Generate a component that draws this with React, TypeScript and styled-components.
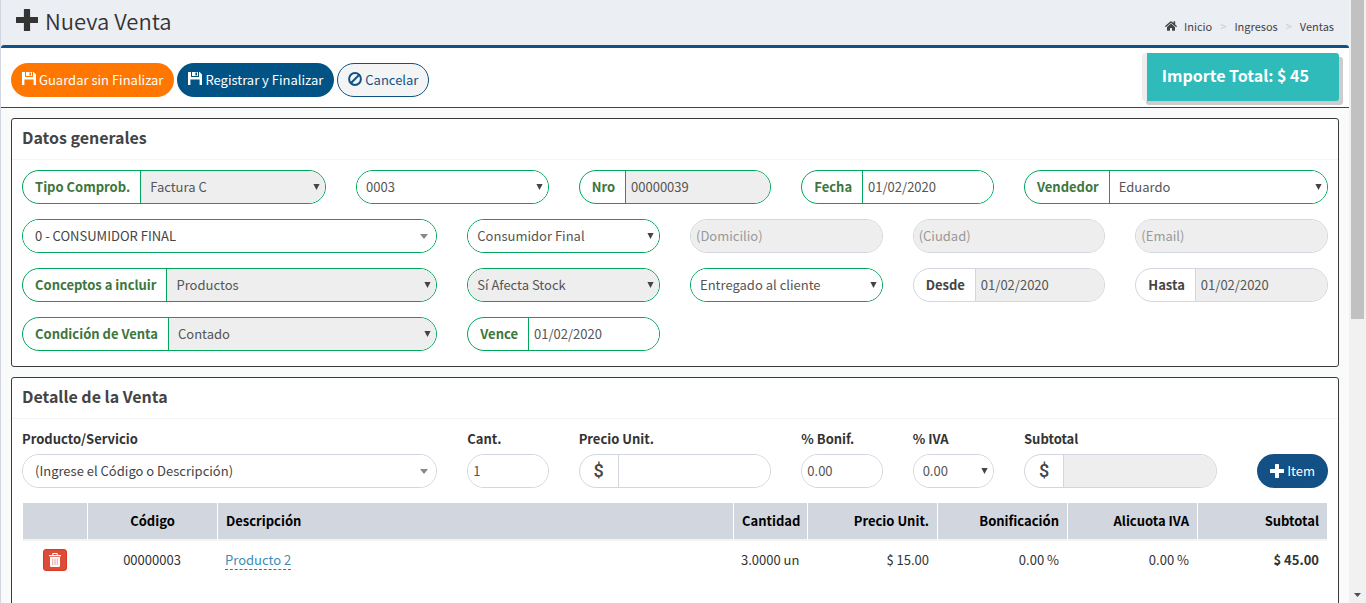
import React, { useId } from 'react';
import styled, { createGlobalStyle, css } from 'styled-components';
import { FaHome } from 'react-icons/fa';

const GlobalStyle = createGlobalStyle`
  *, *::before, *::after { box-sizing: border-box; }
  body {
    margin: 0;
    background: #f9fafa;
    color: #333;
    font-family: "Noto Sans CJK SC", "Open Sans", sans-serif;
    font-size: 13px;
    line-height: 20px;
  }
  button, input, select { font: inherit; margin: 0; }
`;

const GREEN = '#00a65a';
const GREY = '#d2d6de';
const BLUE = '#0f5288';

const Shell = styled.div`
  display: flex;
  height: 100vh;
  overflow: hidden;
`;

const Content = styled.div`
  flex: 1;
  min-width: 0;
  overflow: hidden;
  border-left: 1px solid ${GREY};
`;

const ScrollTrack = styled.div`
  flex: 0 0 17px;
  display: flex;
  flex-direction: column;
  align-items: center;
  justify-content: space-between;
  padding-bottom: 6px;
  background: #f1f1f1;
`;

const ScrollThumb = styled.div`
  width: 13px;
  height: 53.5%;
  background: #c1c1c1;
`;

const PageHeader = styled.header`
  display: flex;
  justify-content: space-between;
  height: 45px;
  padding: 0 15px;
  background: #ebeef3;
`;

const PageTitle = styled.h1`
  display: flex;
  align-items: center;
  gap: 7px;
  height: 40px;
  margin: 0;
  font-size: 22px;
  font-weight: 350;
  line-height: 24px;
`;

const Crumbs = styled.nav`
  display: flex;
  align-items: center;
  gap: 8px;
  height: 52px;
  font-size: 11px;
  color: #ccc;
`;

const Crumb = styled.a`
  display: flex;
  align-items: center;
  gap: 7px;
  color: #444;
  text-decoration: none;
`;

const Toolbar = styled.div`
  display: flex;
  align-items: flex-start;
  gap: 3px;
  height: 63px;
  padding: 0 10px;
  border-top: 3px solid ${BLUE};
  border-bottom: 1px solid ${BLUE};
  border-radius: 3px 3px 0 0;
  background: #fff;
`;

const ToolbarActions = styled.div`
  display: flex;
  gap: 3px;
  padding-top: 15px;
`;

const PillButton = styled.button<{ $tone: 'orange' | 'blue' | 'navy' | 'plain' }>`
  display: flex;
  align-items: center;
  justify-content: center;
  gap: 3px;
  height: 34px;
  padding: 0 10px;
  border: 1px solid transparent;
  border-radius: 17px;
  color: #fff;
  white-space: nowrap;
  cursor: pointer;
  ${({ $tone }) => $tone === 'orange' && css`background: #ff7701;`}
  ${({ $tone }) => $tone === 'blue' && css`background: #005384;`}
  ${({ $tone }) => $tone === 'navy' && css`
    padding: 0 12px;
    background: #125085;
  `}
  ${({ $tone }) => $tone === 'plain' && css`
    background: #f4f4f4;
    border-color: ${BLUE};
    color: ${BLUE};
  `}
`;

const TotalBadge = styled.output`
  height: 48px;
  margin: 5px 0 0 auto;
  padding: 0 30px 0 15px;
  border-left: 5px solid #eee;
  border-radius: 3px;
  background: #30bbbb;
  box-shadow: 4px 4px 0 #ccc;
  color: #fff;
  font-size: 16px;
  font-weight: 700;
  line-height: 44px;
`;

const Main = styled.main`
  display: flex;
  flex-direction: column;
  gap: 10px;
  padding: 10px;
`;

const Panel = styled.section`
  border: 1px solid #3a3a3a;
  border-radius: 3px;
  background: #fff;
`;

const PanelTitle = styled.h2`
  height: 41px;
  margin: 0;
  padding: 0 10px;
  border-bottom: 1px solid #f4f4f4;
  color: #444;
  font-size: 16px;
  font-weight: 700;
  line-height: 36px;
`;

const FormGrid = styled.div`
  display: grid;
  grid-template-columns: repeat(12, minmax(0, 1fr));
  gap: 15px 30px;
  padding: 10px 10px 15px;
`;

const Cell = styled.div<{ $span: number; $end?: boolean }>`
  grid-column: span ${({ $span }) => $span};
  ${({ $end }) => $end && css`
    display: flex;
    align-items: flex-end;
    justify-content: flex-end;
  `}
`;

const TopLabel = styled.label`
  display: block;
  height: 25px;
  font-weight: 700;
`;

const Frame = styled.div<{ $valid?: boolean }>`
  --line: ${({ $valid }) => ($valid ? GREEN : GREY)};
  display: flex;
  height: 34px;
  border: 1px solid var(--line);
  border-radius: 17px;
  overflow: hidden;
  background: #fff;
`;

const Addon = styled.label<{ $valid?: boolean }>`
  flex: none;
  padding: 0 10px 0 12px;
  border-right: 1px solid var(--line);
  color: ${({ $valid }) => ($valid ? '#3c763d' : '#444')};
  font-weight: 700;
  line-height: 32px;
  white-space: nowrap;
`;

const Currency = styled.span`
  flex: 0 0 39px;
  border-right: 1px solid var(--line);
  color: #444;
  font-family: Roboto, "Liberation Sans", sans-serif;
  font-size: 18px;
  font-weight: 500;
  line-height: 32px;
  text-align: center;
`;

const TextInput = styled.input`
  flex: 1;
  min-width: 0;
  padding: 0 5px;
  border: 0;
  outline: 0;
  background: #fff;
  color: #555;
  &:read-only { background: #eee; }
  &::placeholder { color: #999; opacity: 1; }
`;

const SelectBox = styled.div`
  display: grid;
  flex: 1;
  align-items: center;
  min-width: 0;
  > * { grid-area: 1 / 1; }
  > svg { justify-self: end; pointer-events: none; }
`;

const NativeSelect = styled.select<{ $search?: boolean }>`
  appearance: none;
  width: 100%;
  height: 32px;
  padding: 0 22px 0 ${({ $search }) => ($search ? 12 : 9)}px;
  border: 0;
  outline: 0;
  background: #fff;
  color: ${({ $search }) => ($search ? '#444' : '#555')};
  opacity: 1;
  &:disabled { background: #eee; }
`;

const Arrow = styled.svg<{ $search?: boolean }>`
  margin-right: ${({ $search }) => ($search ? 8 : 5)}px;
  fill: ${({ $search }) => ($search ? '#888' : '#444')};
`;

const TableWrap = styled.div`
  padding: 0 11px 40px 10px;
`;

const Table = styled.table`
  width: 100%;
  table-layout: fixed;
  border-collapse: separate;
  border-spacing: 0;
`;

const Col = styled.col<{ $width?: string }>`
  width: ${({ $width }) => $width ?? 'auto'};
`;

type Align = 'left' | 'center' | 'right';

const HeadCell = styled.th<{ $align: Align }>`
  height: 38px;
  padding: 0 8px;
  border-left: 1px solid #fff;
  border-bottom: 2px solid #f4f4f4;
  background: ${GREY};
  background-clip: padding-box;
  color: #000;
  text-align: ${({ $align }) => $align};
  white-space: nowrap;
`;

const BodyCell = styled.td<{ $align: Align; $strong?: boolean }>`
  height: 38px;
  padding: 0 8px;
  text-align: ${({ $align }) => $align};
  font-weight: ${({ $strong }) => ($strong ? 700 : 400)};
  white-space: nowrap;
`;

const EditLink = styled.a`
  border-bottom: 1px dashed #0088cc;
  color: #3c8dbc;
  text-decoration: none;
`;

const DeleteButton = styled.button`
  display: inline-flex;
  align-items: center;
  justify-content: center;
  width: 24px;
  height: 22px;
  padding: 0;
  border: 1px solid #d73925;
  border-radius: 3px;
  background: #dd4b39;
  color: #fff;
  vertical-align: middle;
`;

const PlusIcon = ({ size }: { size: number }) => (
  <svg width={size} height={size} viewBox="0 0 22 22" fill="currentColor" aria-hidden="true">
    <path d="M8.5 0h5q.6 0 .6.6v7.3h7.3q.6 0 .6.6v5q0 .6-.6.6h-7.3v7.3q0 .6-.6.6h-5q-.6 0-.6-.6v-7.3H.6q-.6 0-.6-.6v-5q0-.6.6-.6h7.3V.6q0-.6.6-.6z" />
  </svg>
);

const SaveIcon = () => (
  <svg width="14" height="18" viewBox="0 0 14 18" fill="currentColor" aria-hidden="true">
    <path fillRule="evenodd" d="M0 1h3v5h8V1h.6L14 3.4V14h-2.4V8.4H2.4V14H0zM4 1h6v4H4zM7.4 1.6v2.8h1.6V1.6z" />
  </svg>
);

const BanIcon = () => (
  <svg width="14" height="16" viewBox="0 0 14 16" fill="none" stroke="currentColor" strokeWidth="2" aria-hidden="true">
    <circle cx="7" cy="7" r="5.9" />
    <path d="M3 11L11 3" />
  </svg>
);

const TrashIcon = () => (
  <svg width="12" height="14" viewBox="0 0 12 14" fill="currentColor" aria-hidden="true">
    <path fillRule="evenodd" d="M4 0h4q.7 0 .7.7V2H12v1.2H0V2h3.3V.7Q3.3 0 4 0zm.4 1v1h3.2V1zM1 4h10v8.8q0 1.2-1.2 1.2H2.2Q1 14 1 12.8z" />
    <path d="M3.5 5.5v6.5M5.2 5.5v6.5M6.8 5.5v6.5M8.5 5.5v6.5" stroke="#dd4b39" strokeWidth="0.4" />
  </svg>
);

interface FieldProps {
  label: string;
  addon?: boolean;
  valid?: boolean;
}

interface SelectFieldProps extends FieldProps {
  value: string;
  disabled?: boolean;
  search?: boolean;
  id?: string;
}

function SelectField({ label, addon, valid, value, disabled, search, id }: SelectFieldProps) {
  const autoId = useId();
  const fieldId = id ?? autoId;
  return (
    <Frame $valid={valid}>
      {addon && <Addon htmlFor={fieldId} $valid={valid}>{label}</Addon>}
      <SelectBox>
        <NativeSelect id={fieldId} aria-label={addon || id ? undefined : label} disabled={disabled} $search={search}>
          <option>{value}</option>
        </NativeSelect>
        {search ? (
          <Arrow $search width="8" height="5" viewBox="0 0 8 5"><path d="M0 0h8L4 5z" /></Arrow>
        ) : (
          <Arrow width="7" height="8" viewBox="0 0 7 8"><path d="M.4 1h6.2L3.5 7z" /></Arrow>
        )}
      </SelectBox>
    </Frame>
  );
}

interface InputFieldProps extends FieldProps {
  value?: string;
  placeholder?: string;
  readOnly?: boolean;
  currency?: boolean;
  id?: string;
}

function InputField({ label, addon, valid, value = '', placeholder, readOnly, currency, id }: InputFieldProps) {
  const autoId = useId();
  const fieldId = id ?? autoId;
  return (
    <Frame $valid={valid}>
      {addon && <Addon htmlFor={fieldId} $valid={valid}>{label}</Addon>}
      {currency && <Currency>$</Currency>}
      <TextInput
        id={fieldId}
        aria-label={addon || id ? undefined : label}
        defaultValue={value}
        placeholder={placeholder}
        readOnly={readOnly}
      />
    </Frame>
  );
}

const columns: { title: string; align: Align; width?: string }[] = [
  { title: '', align: 'center', width: '65px' },
  { title: 'Código', align: 'center', width: '130px' },
  { title: 'Descripción', align: 'left' },
  { title: 'Cantidad', align: 'right', width: '74px' },
  { title: 'Precio Unit.', align: 'right', width: '130px' },
  { title: 'Bonificación', align: 'right', width: '130px' },
  { title: 'Alicuota IVA', align: 'right', width: '130px' },
  { title: 'Subtotal', align: 'right', width: '130px' },
];

export default function App() {
  return (
    <Shell>
      <GlobalStyle />
      <Content>
        <PageHeader>
          <PageTitle><PlusIcon size={22} />Nueva Venta</PageTitle>
          <Crumbs aria-label="Ruta">
            <Crumb href="#inicio"><FaHome size={12} />Inicio</Crumb>
            <span>&gt;</span>
            <Crumb href="#ingresos">Ingresos</Crumb>
            <span>&gt;</span>
            <Crumb href="#ventas">Ventas</Crumb>
          </Crumbs>
        </PageHeader>

        <Toolbar>
          <ToolbarActions>
            <PillButton type="button" $tone="orange"><SaveIcon />Guardar sin Finalizar</PillButton>
            <PillButton type="button" $tone="blue"><SaveIcon />Registrar y Finalizar</PillButton>
            <PillButton type="button" $tone="plain"><BanIcon />Cancelar</PillButton>
          </ToolbarActions>
          <TotalBadge>Importe Total: $ 45</TotalBadge>
        </Toolbar>

        <Main>
          <Panel>
            <PanelTitle>Datos generales</PanelTitle>
            <FormGrid>
              <Cell $span={3}><SelectField label="Tipo Comprob." addon valid disabled value="Factura C" /></Cell>
              <Cell $span={2}><SelectField label="Punto de venta" valid value="0003" /></Cell>
              <Cell $span={2}><InputField label="Nro" addon valid readOnly value="00000039" /></Cell>
              <Cell $span={2}><InputField label="Fecha" addon valid value="01/02/2020" /></Cell>
              <Cell $span={3}><SelectField label="Vendedor" addon valid value="Eduardo" /></Cell>

              <Cell $span={4}><SelectField label="Cliente" valid search value="0 - CONSUMIDOR FINAL" /></Cell>
              <Cell $span={2}><SelectField label="Condición de IVA" valid value="Consumidor Final" /></Cell>
              <Cell $span={2}><InputField label="Domicilio" readOnly placeholder="(Domicilio)" /></Cell>
              <Cell $span={2}><InputField label="Ciudad" readOnly placeholder="(Ciudad)" /></Cell>
              <Cell $span={2}><InputField label="Email" readOnly placeholder="(Email)" /></Cell>

              <Cell $span={4}><SelectField label="Conceptos a incluir" addon valid disabled value="Productos" /></Cell>
              <Cell $span={2}><SelectField label="Stock" valid disabled value="Sí Afecta Stock" /></Cell>
              <Cell $span={2}><SelectField label="Entrega" valid value="Entregado al cliente" /></Cell>
              <Cell $span={2}><InputField label="Desde" addon readOnly value="01/02/2020" /></Cell>
              <Cell $span={2}><InputField label="Hasta" addon readOnly value="01/02/2020" /></Cell>

              <Cell $span={4}><SelectField label="Condición de Venta" addon valid disabled value="Contado" /></Cell>
              <Cell $span={2}><InputField label="Vence" addon valid value="01/02/2020" /></Cell>
            </FormGrid>
          </Panel>

          <Panel>
            <PanelTitle>Detalle de la Venta</PanelTitle>
            <FormGrid>
              <Cell $span={4}>
                <TopLabel htmlFor="producto">Producto/Servicio</TopLabel>
                <SelectField id="producto" label="Producto/Servicio" search value="(Ingrese el Código o Descripción)" />
              </Cell>
              <Cell $span={1}>
                <TopLabel htmlFor="cantidad">Cant.</TopLabel>
                <InputField id="cantidad" label="Cant." value="1" />
              </Cell>
              <Cell $span={2}>
                <TopLabel htmlFor="precio">Precio Unit.</TopLabel>
                <InputField id="precio" label="Precio Unit." currency />
              </Cell>
              <Cell $span={1}>
                <TopLabel htmlFor="bonif">% Bonif.</TopLabel>
                <InputField id="bonif" label="% Bonif." value="0.00" />
              </Cell>
              <Cell $span={1}>
                <TopLabel htmlFor="iva">% IVA</TopLabel>
                <SelectField id="iva" label="% IVA" value="0.00" />
              </Cell>
              <Cell $span={2}>
                <TopLabel htmlFor="subtotal">Subtotal</TopLabel>
                <InputField id="subtotal" label="Subtotal" currency readOnly />
              </Cell>
              <Cell $span={1} $end>
                <PillButton type="button" $tone="navy"><PlusIcon size={14} />Item</PillButton>
              </Cell>
            </FormGrid>
            <TableWrap>
              <Table>
                <colgroup>{columns.map((c, i) => <Col key={i} $width={c.width} />)}</colgroup>
                <thead>
                  <tr>{columns.map((c, i) => <HeadCell key={i} $align={c.align}>{c.title}</HeadCell>)}</tr>
                </thead>
                <tbody>
                  <tr>
                    <BodyCell $align="center">
                      <DeleteButton type="button" aria-label="Eliminar"><TrashIcon /></DeleteButton>
                    </BodyCell>
                    <BodyCell $align="center">00000003</BodyCell>
                    <BodyCell $align="left"><EditLink href="#producto-2">Producto 2</EditLink></BodyCell>
                    <BodyCell $align="right">3.0000 un</BodyCell>
                    <BodyCell $align="right">$ 15.00</BodyCell>
                    <BodyCell $align="right">0.00 %</BodyCell>
                    <BodyCell $align="right">0.00 %</BodyCell>
                    <BodyCell $align="right" $strong>$ 45.00</BodyCell>
                  </tr>
                </tbody>
              </Table>
            </TableWrap>
          </Panel>
        </Main>
      </Content>
      <ScrollTrack aria-hidden="true">
        <ScrollThumb />
        <svg width="7" height="4" viewBox="0 0 7 4" fill="#505050"><path d="M0 0h7L3.5 4z" /></svg>
      </ScrollTrack>
    </Shell>
  );
}
